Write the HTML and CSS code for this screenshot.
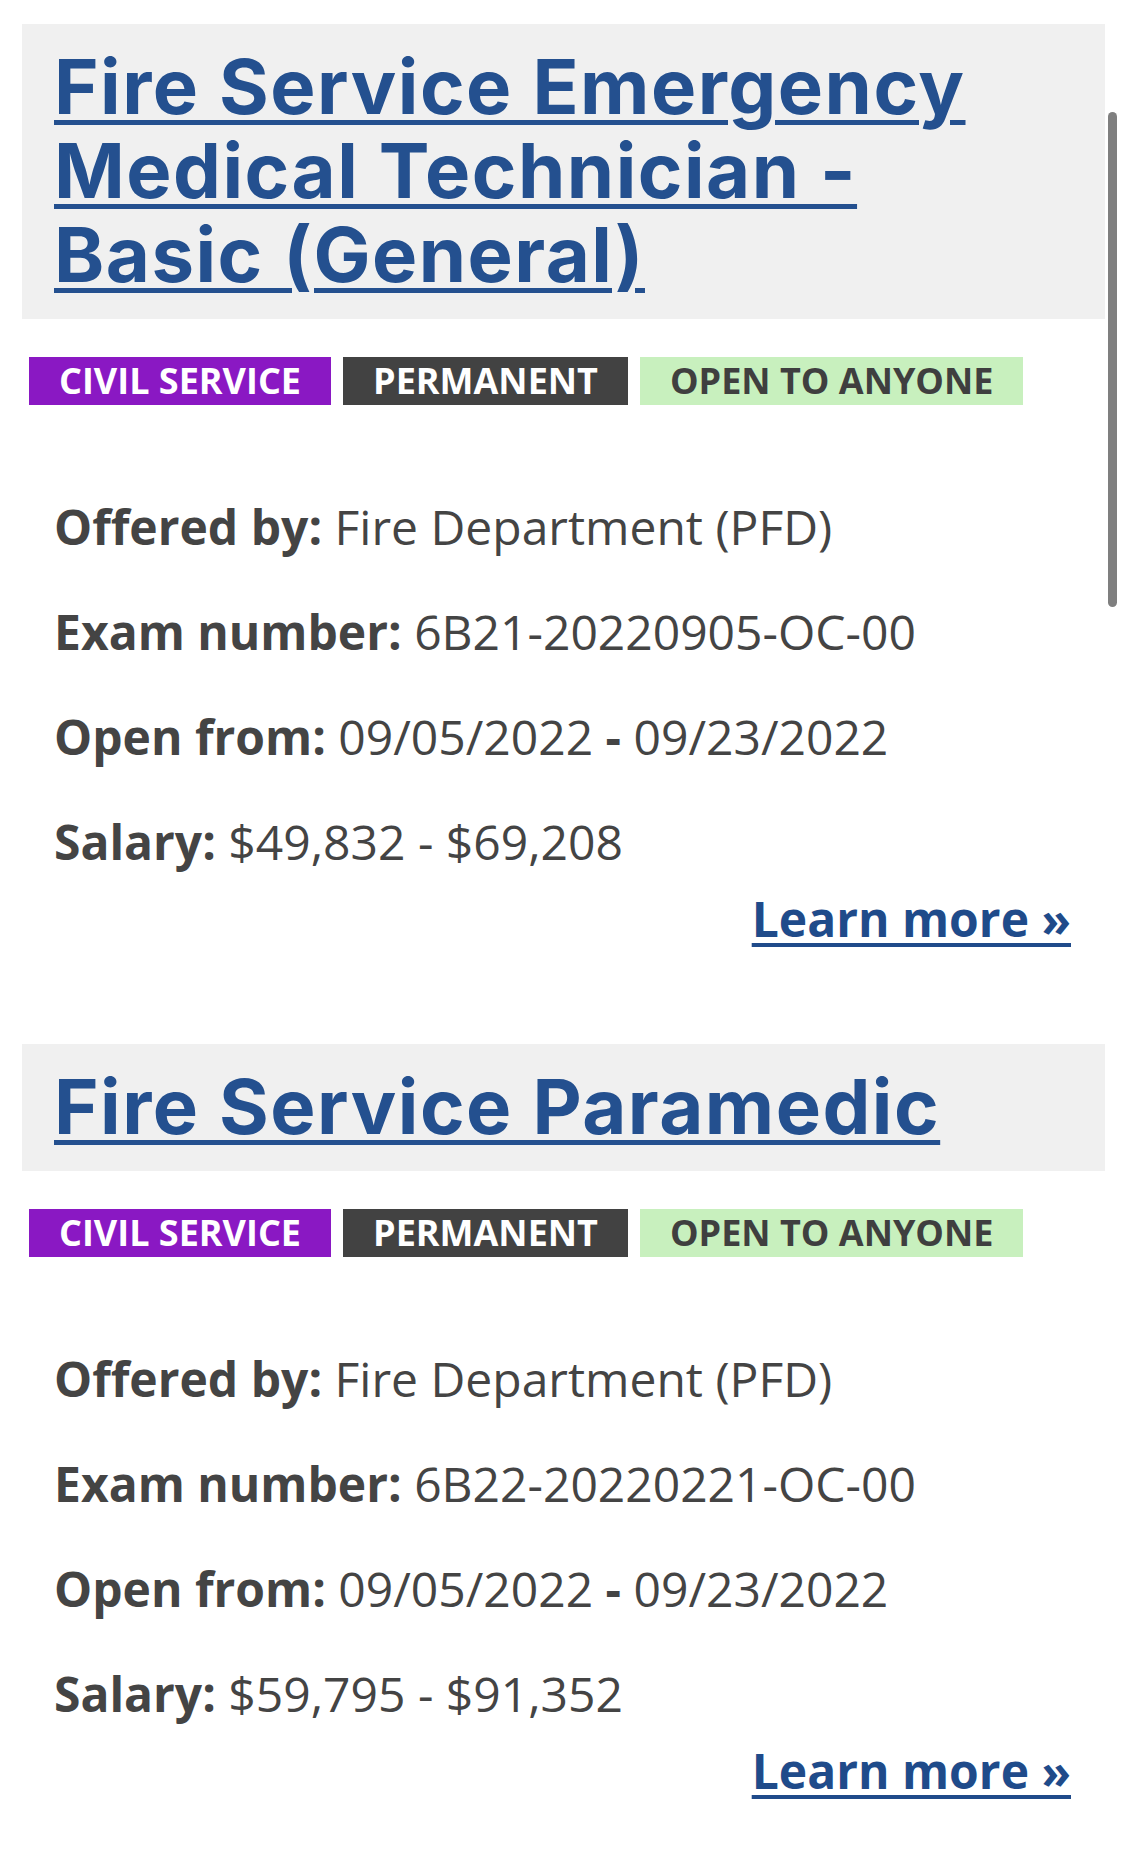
FILE: index.html
```html
<!DOCTYPE html>
<html lang="en">
<head>
<meta charset="utf-8">
<title>Exams</title>
<link rel="stylesheet" href="styles.css">
</head>
<body>
<main class="list">
  <article class="card">
    <div class="card-head">
      <h2 class="card-title"><a href="#">Fire Service Emergency Medical Technician - Basic (General)</a></h2>
    </div>
    <ul class="tags">
      <li class="tag tag-civil">Civil Service</li>
      <li class="tag tag-perm">Permanent</li>
      <li class="tag tag-open">Open to Anyone</li>
    </ul>
    <div class="details">
      <p class="row"><b>Offered by:</b> Fire Department (PFD)</p>
      <p class="row"><b>Exam number:</b> 6B21-20220905-OC-00</p>
      <p class="row"><b>Open from:</b> 09/05/2022 <b>-</b> 09/23/2022</p>
      <p class="row"><b>Salary:</b> $49,832 - $69,208</p>
    </div>
    <div class="more"><a href="#">Learn more »</a></div>
  </article>
  <article class="card">
    <div class="card-head">
      <h2 class="card-title"><a href="#">Fire Service Paramedic</a></h2>
    </div>
    <ul class="tags">
      <li class="tag tag-civil">Civil Service</li>
      <li class="tag tag-perm">Permanent</li>
      <li class="tag tag-open">Open to Anyone</li>
    </ul>
    <div class="details">
      <p class="row"><b>Offered by:</b> Fire Department (PFD)</p>
      <p class="row"><b>Exam number:</b> 6B22-20220221-OC-00</p>
      <p class="row"><b>Open from:</b> 09/05/2022 <b>-</b> 09/23/2022</p>
      <p class="row"><b>Salary:</b> $59,795 - $91,352</p>
    </div>
    <div class="more"><a href="#">Learn more »</a></div>
  </article>
</main>
<div class="scroll-indicator"></div>
</body>
</html>
```
FILE: styles.css
```css
html, body {
  margin: 0;
  padding: 0;
  background: #ffffff;
}
body {
  font-family: "Open Sans", "Liberation Sans", sans-serif;
  color: #444444;
  width: 1125px;
  overflow: hidden;
}
.list {
  padding: 24px 20px 0 22px;
}
.card {
  margin-bottom: 100px;
}
.card-head {
  background: #f0f0f0;
  padding: 20px 32px 23px 32px;
}
.card-title {
  margin: 0;
  font-family: Inter, "Liberation Sans", sans-serif;
  font-weight: 700;
  font-size: 76px;
  line-height: 84px;
  letter-spacing: 1.5px;
}
.card-title a {
  color: #24508f;
  text-decoration: underline;
  text-decoration-thickness: 5px;
  text-underline-offset: 6px;
}
.tags {
  list-style: none;
  margin: 38px 0 0 7px;
  padding: 0;
  display: flex;
  gap: 12px;
}
.tag {
  height: 48px;
  line-height: 48px;
  padding: 0 30px;
  font-size: 36px;
  font-weight: 700;
  text-transform: uppercase;
}
.tag-civil { background: #8a18c3; color: #ffffff; }
.tag-perm { background: #424242; color: #ffffff; }
.tag-open { background: #c8f0be; color: #3f3f3f; }
.details {
  margin-top: 69px;
  padding-left: 32px;
}
.row {
  margin: 0;
  font-size: 48px;
  line-height: 105px;
}
.row b {
  font-weight: 700;
}
.more {
  text-align: right;
  padding-right: 34px;
  font-size: 48px;
  line-height: 50px;
  font-weight: 700;
}
.more a {
  color: #1f4b8a;
  text-decoration: underline;
  text-decoration-thickness: 4px;
  text-underline-offset: 6px;
}
.scroll-indicator {
  position: fixed;
  left: 1108px;
  top: 112px;
  width: 9px;
  height: 495px;
  border-radius: 5px;
  background: #7f7f7f;
}
```
